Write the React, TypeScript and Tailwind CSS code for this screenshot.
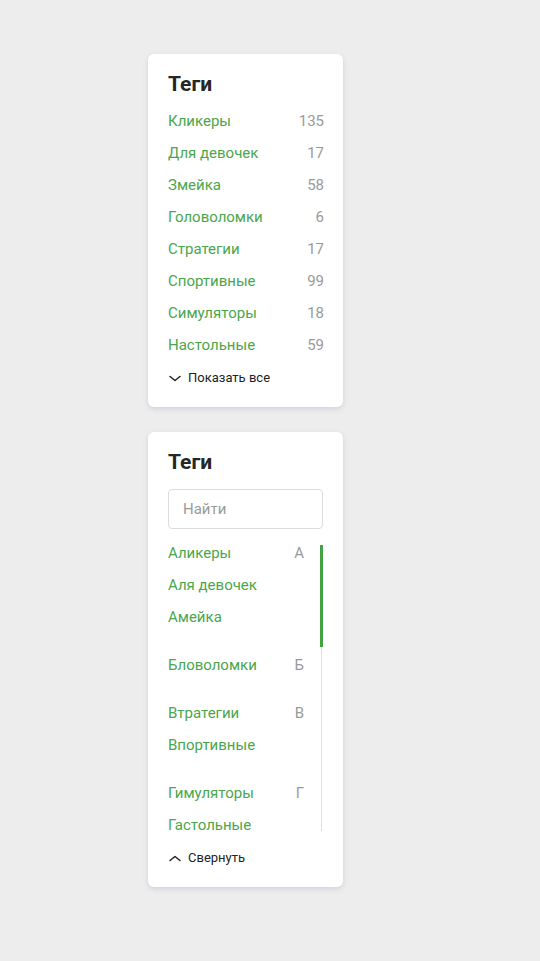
const tags = [
  { name: "Кликеры", count: 135 },
  { name: "Для девочек", count: 17 },
  { name: "Змейка", count: 58 },
  { name: "Головоломки", count: 6 },
  { name: "Стратегии", count: 17 },
  { name: "Спортивные", count: 99 },
  { name: "Симуляторы", count: 18 },
  { name: "Настольные", count: 59 },
];

const groups = [
  { letter: "А", items: ["Аликеры", "Аля девочек", "Амейка"] },
  { letter: "Б", items: ["Бловоломки"] },
  { letter: "В", items: ["Втратегии", "Впортивные"] },
  { letter: "Г", items: ["Гимуляторы", "Гастольные"] },
];

function Chevron({ up }: { up?: boolean }) {
  return (
    <svg width="14" height="14" viewBox="0 0 14 14" fill="none" className="shrink-0">
      <path
        d={up ? "M2 9.5 L7 5.5 L12 9.5" : "M2 5.5 L7 9.5 L12 5.5"}
        stroke="#222"
        strokeWidth="1.5"
        strokeLinecap="round"
        strokeLinejoin="round"
      />
    </svg>
  );
}

function Card({ children }: { children: React.ReactNode }) {
  return (
    <div className="w-[195px] bg-white rounded-[6px] shadow-[0_2px_5px_rgba(150,160,185,0.35)] pt-[18px] pl-5 pr-[19px] pb-5">
      <h2 className="text-[21px] leading-6 font-bold text-[#262626]">Теги</h2>
      {children}
    </div>
  );
}

export default function App() {
  return (
    <div className="min-h-screen bg-[#ededed] pt-[54px] pl-[148px] flex flex-col items-start gap-[25px] font-['Roboto',sans-serif]">
      <Card>
        <ul className="mt-[9px]">
          {tags.map((t) => (
            <li key={t.name} className="h-8 flex items-center justify-between text-[15px]">
              <span className="text-[#4ba64b]">{t.name}</span>
              <span className="text-[#9a9a9a]">{t.count}</span>
            </li>
          ))}
        </ul>
        <button className="mt-2 h-[18px] flex items-center gap-[6px] text-[13px] text-[#222]">
          <Chevron /> Показать все
        </button>
      </Card>

      <Card>
        <input
          placeholder="Найти"
          className="mt-[15px] w-[155px] h-10 rounded-[4px] border border-[#dcdcdc] px-[14px] text-[15px] text-[#222] placeholder:text-[#9a9a9a] outline-none"
        />
        <div className="mt-2 h-[294px] flex overflow-hidden">
          <div className="flex-1 pr-[16px]">
            {groups.map((g, gi) => (
              <div key={g.letter} className={gi > 0 ? "mt-4" : ""}>
                {g.items.map((name, i) => (
                  <div key={name} className="h-8 flex items-center justify-between text-[15px]">
                    <span className="text-[#4ba64b]">{name}</span>
                    {i === 0 && <span className="text-[#9a9a9a]">{g.letter}</span>}
                  </div>
                ))}
              </div>
            ))}
          </div>
          <div className="relative w-[3px] mt-2 mr-px flex justify-center">
            <div className="w-px h-full bg-[#dedede]" />
            <div className="absolute top-0 left-0 w-[3px] h-[102px] bg-[#43a343]" />
          </div>
        </div>
        <button className="mt-[18px] h-[18px] flex items-center gap-[6px] text-[13px] text-[#222]">
          <Chevron up /> Свернуть
        </button>
      </Card>
    </div>
  );
}
